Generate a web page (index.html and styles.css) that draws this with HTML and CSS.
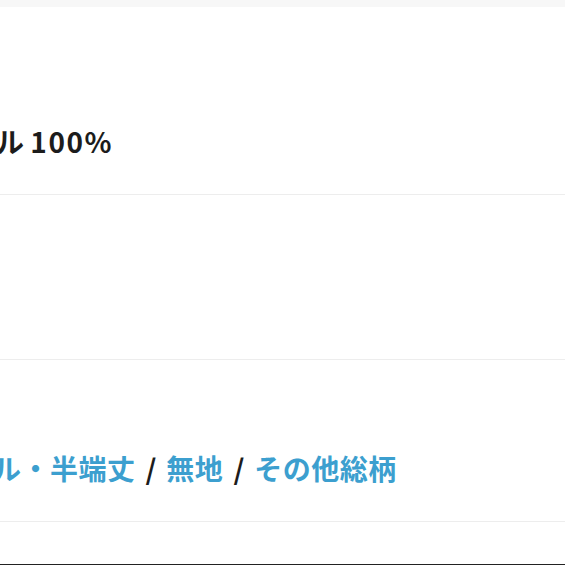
FILE: index.html
```html
<!DOCTYPE html>
<html lang="ja">
<head>
<meta charset="utf-8">
<link rel="stylesheet" href="styles.css">
</head>
<body>
<div class="topbar"></div>
<section class="row row-material">
  <p class="value value-material">ル <span class="num">100%</span></p>
</section>
<section class="row row-empty"></section>
<section class="row row-category">
  <p class="value value-category"><a class="link" href="#">ル・半端丈</a><span class="sep">/</span><a class="link" href="#">無地</a><span class="sep">/</span><a class="link" href="#">その他総柄</a></p>
</section>
<section class="row row-last"></section>
<div class="bottombar"></div>
</body>
</html>
```

FILE: styles.css
```css
html, body {
  margin: 0;
  padding: 0;
  background: #ffffff;
  overflow: hidden;
}
body {
  font-family: "Noto Sans CJK JP", "Noto Sans", sans-serif;
  color: #222222;
}
.topbar {
  height: 7px;
  background: #f7f7f7;
}
.row {
  border-bottom: 1px solid #ededed;
  box-sizing: border-box;
}
.row-material {
  height: 188px;
  padding-top: 114px;
}
.row-empty {
  height: 165px;
}
.row-category {
  height: 162px;
  padding-top: 88px;
}
.row-last {
  height: 42px;
  border-bottom: none;
}
.bottombar {
  height: 1px;
  background: #222222;
}
.value {
  margin: 0;
  font-size: 28px;
  line-height: 40px;
  font-weight: 700;
  white-space: nowrap;
}
.value-material {
  margin-left: -4px;
  color: #1c1c1c;
}
.num {
  letter-spacing: 1.5px;
}
.value-category {
  margin-left: -7px;
}
.link {
  color: #3c9fcf;
  text-decoration: none;
  letter-spacing: 0.5px;
}
.sep {
  color: #1c1c1c;
  margin: 0 10px;
}
```
